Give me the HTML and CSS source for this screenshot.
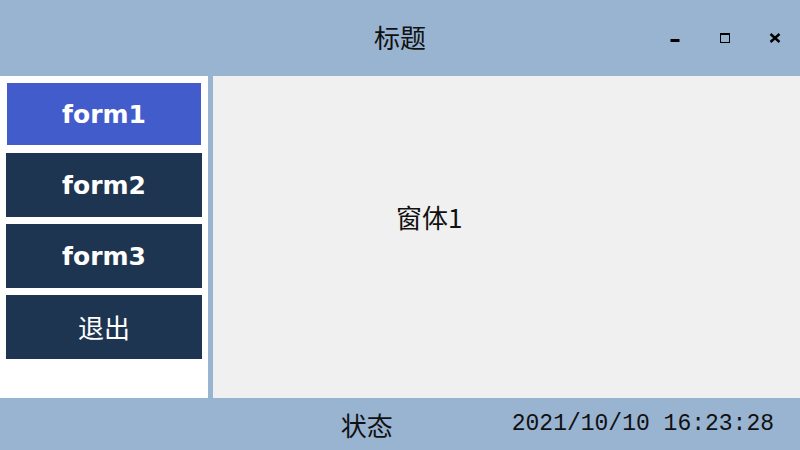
FILE: index.html
```html
<!DOCTYPE html>
<html lang="zh">
<head>
<meta charset="utf-8">
<title>标题</title>
<link rel="stylesheet" href="styles.css">
</head>
<body>
<div class="window">
  <header class="titlebar">
    <div class="spacer"></div>
    <div class="title">标题</div>
    <div class="controls">
      <button class="ctl" aria-label="minimize">
        <svg width="10" height="10" viewBox="0 0 10 10"><rect x="0.5" y="6" width="9" height="3" fill="#000"/></svg>
      </button>
      <button class="ctl" aria-label="maximize">
        <svg width="10" height="10" viewBox="0 0 10 10"><rect x="0.5" y="0.5" width="9" height="9" fill="none" stroke="#000" stroke-width="1"/><rect x="0" y="0" width="10" height="2" fill="#000"/></svg>
      </button>
      <button class="ctl" aria-label="close">
        <svg width="12" height="10" viewBox="0 0 12 10"><path d="M1.5 1 L10.5 9 M10.5 1 L1.5 9" stroke="#000" stroke-width="2.4" fill="none"/></svg>
      </button>
    </div>
  </header>
  <div class="main">
    <nav class="sidebar">
      <button class="nav active">form1</button>
      <button class="nav">form2</button>
      <button class="nav">form3</button>
      <button class="nav cjk">退出</button>
    </nav>
    <section class="content">
      <div class="label">窗体1</div>
    </section>
  </div>
  <footer class="statusbar">
    <span class="status">状态</span>
    <span class="time">2021/10/10 16:23:28</span>
  </footer>
</div>
</body>
</html>
```
FILE: styles.css
```css
* { box-sizing: border-box; }
html, body { margin: 0; padding: 0; }
body {
  width: 800px;
  height: 450px;
  overflow: hidden;
  font-family: "Noto Sans CJK SC", "DejaVu Sans", sans-serif;
  background: #99b4d1;
}
.window {
  display: flex;
  flex-direction: column;
  width: 800px;
  height: 450px;
}
.titlebar {
  height: 76px;
  flex: none;
  display: grid;
  grid-template-columns: 1fr auto 1fr;
  align-items: center;
  background: #99b4d1;
}
.title {
  font-family: "Noto Sans CJK SC", serif;
  font-size: 26px;
  color: #111;
  line-height: 1;
  padding-bottom: 2px;
}
.controls {
  display: flex;
  justify-content: flex-end;
  align-self: stretch;
  align-items: center;
}
.ctl {
  width: 50px;
  height: 76px;
  border: 0;
  padding: 0;
  background: transparent;
  display: flex;
  align-items: center;
  justify-content: center;
}
.ctl svg { display: block; }
.main {
  flex: 1;
  display: flex;
  min-height: 0;
}
.sidebar {
  width: 208px;
  flex: none;
  background: #fff;
  display: flex;
  flex-direction: column;
  gap: 7px;
  padding: 6px 6px 0 6px;
}
.nav {
  height: 64px;
  border: 0;
  margin: 0;
  background: #1e3551;
  color: #fff;
  font-family: "DejaVu Sans", sans-serif;
  font-weight: bold;
  font-size: 25px;
  padding: 0;
}
.nav.active {
  background: #435ccc;
  border: 1px solid #fff;
}
.nav.cjk {
  font-family: "Noto Sans CJK SC", serif;
  font-weight: normal;
  font-size: 26px;
  padding-bottom: 2px;
}
.content {
  flex: 1;
  margin-left: 5px;
  background: #f0f0f0;
  padding: 125px 0 0 183px;
}
.label {
  font-family: "Noto Sans CJK SC", serif;
  font-size: 26px;
  color: #111;
  line-height: 1.2;
}
.statusbar {
  height: 52px;
  flex: none;
  display: flex;
  align-items: center;
  justify-content: flex-end;
  gap: 119px;
  padding: 0 26px 0 0;
  background: #99b4d1;
}
.status {
  font-family: "Noto Sans CJK SC", serif;
  font-size: 26px;
  color: #111;
}
.time {
  font-family: "Liberation Mono", monospace;
  font-size: 23px;
  color: #111;
}
```
